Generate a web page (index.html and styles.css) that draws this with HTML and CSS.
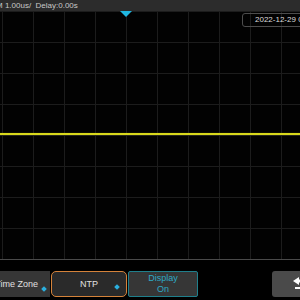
FILE: index.html
```html
<!DOCTYPE html>
<html lang="en">
<head>
    <meta charset="UTF-8">
    <title>Scope Display</title>
    <link rel="stylesheet" href="styles.css">
</head>
<body>
    <div class="topbar">M 1.00us/&nbsp; Delay:0.00s</div>

    <div class="screen">
        <div class="trigger"></div>
        <div class="date">2022-12-29 08:15:42</div>
        <div class="trace"></div>
    </div>

    <div class="softkeys">
        <div class="key key-zone">Time Zone<span class="knob"></span></div>
        <div class="key key-ntp">NTP<span class="knob"></span></div>
        <div class="key key-display">Display<br>On</div>
        <div class="spacer"></div>
        <div class="key key-back">
            <svg width="14" height="14" viewBox="0 0 14 14">
                <path d="M1 4 L7 0 L7 2.5 L13 2.5 L13 5.5 L7 5.5 L7 8 Z" fill="#fff"/>
                <rect x="3" y="10" width="11" height="2" fill="#fff"/>
            </svg>
        </div>
    </div>
</body>
</html>
```

FILE: styles.css
```css
body {
    margin: 0;
    width: 300px;
    height: 300px;
    overflow: hidden;
    background: #000;
    font-family: "Liberation Sans", Arial, sans-serif;
}
.topbar {
    height: 11px;
    background: #2c2c2c;
    color: #c8c8c8;
    font-size: 8px;
    line-height: 11px;
    white-space: nowrap;
    margin-left: -4px;
}
.screen {
    position: relative;
    height: 248px;
    border-bottom: 1px solid #4a4a4a;
    background-color: #020202;
    background-image:
        linear-gradient(to right, #1c1c1c 1px, transparent 1px),
        linear-gradient(to bottom, #1c1c1c 1px, transparent 1px);
    background-size: 31px 31px;
    background-position: 2px 0, 0 0;
}
.trigger {
    position: absolute;
    left: 120px;
    top: 0;
    width: 0;
    height: 0;
    border-left: 6px solid transparent;
    border-right: 6px solid transparent;
    border-top: 6px solid #1fb6e0;
}
.date {
    position: absolute;
    left: 242px;
    top: 2px;
    width: 80px;
    height: 12px;
    border: 1px solid #4c4c4c;
    border-radius: 3px;
    padding-left: 12px;
    color: #dcdcdc;
    font-size: 8px;
    line-height: 12px;
    white-space: nowrap;
}
.trace {
    position: absolute;
    left: 0;
    right: 0;
    top: 122px;
    height: 2px;
    background: #d8d81c;
    box-shadow: 0 0 1px #8a8a10;
}
.softkeys {
    display: flex;
    align-items: flex-start;
    padding-top: 11px;
    height: 29px;
}
.key {
    position: relative;
    box-sizing: border-box;
    height: 26px;
    display: flex;
    align-items: center;
    justify-content: center;
    font-size: 9px;
    color: #e0e0e0;
    text-align: center;
    background: #363636;
}
.key-zone {
    width: 60px;
    margin-left: -10px;
    padding-right: 12px;
    justify-content: flex-end;
}
.key-ntp {
    width: 76px;
    margin-left: 1px;
    background: #2a2a2a;
    border: 1px solid #d4823a;
    border-radius: 5px;
}
.key-display {
    width: 70px;
    margin-left: 1px;
    border: 1px solid #1f7f8c;
    border-radius: 2px;
    color: #2fa9c4;
    line-height: 11px;
}
.spacer {
    flex: 1;
}
.key-back {
    width: 36px;
    margin-right: -8px;
    background: #4a4a4a;
    border-radius: 3px;
    justify-content: flex-start;
    padding-left: 20px;
}
.knob {
    position: absolute;
    right: 7px;
    bottom: 7px;
    width: 4px;
    height: 4px;
    background: #2bb0e0;
    transform: rotate(45deg);
}
.key-zone .knob {
    right: 4px;
    bottom: 6px;
}
```
